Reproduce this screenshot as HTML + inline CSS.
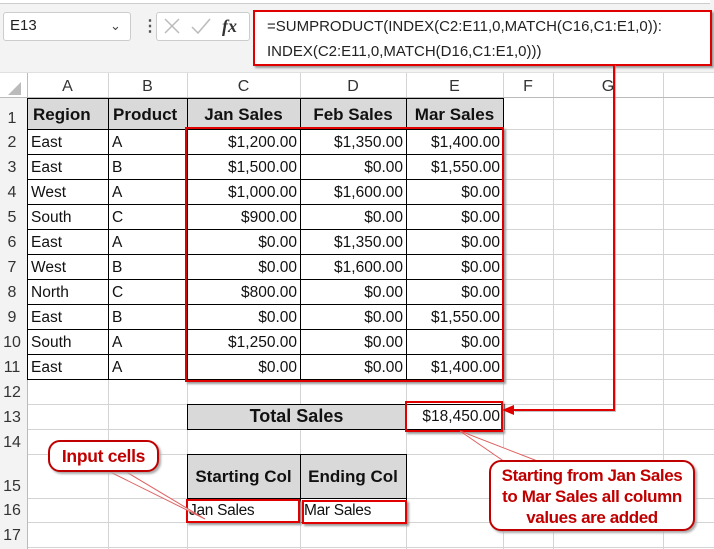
<!DOCTYPE html>
<html><head><meta charset="utf-8"><style>
body{margin:0;width:714px;height:549px;position:relative;overflow:hidden;background:#fff;font-family:"Liberation Sans",Arial,sans-serif;}
.a{position:absolute;}
.v{position:absolute;width:1px;background:#d4d4d4;}
.h{position:absolute;height:1px;background:#d4d4d4;}
.vb{position:absolute;width:1px;background:#000;}
.hb{position:absolute;height:1px;background:#000;}
.t{position:absolute;font-size:15.5px;color:#111;white-space:nowrap;height:25px;line-height:25px;}
.r{text-align:right;}
.c{text-align:center;}
.hd{font-weight:bold;font-size:17px;}
.rn{position:absolute;left:0;width:24px;text-align:center;font-size:16px;color:#333;}
.ch{position:absolute;top:73px;height:25px;line-height:27px;text-align:center;font-size:16px;color:#333;}
.call{position:absolute;border:2px solid #c00000;border-radius:12px;background:#fff;color:#c00000;font-weight:bold;text-align:center;box-shadow:2px 2px 2px #aaa;}
</style></head><body>
<div class="a" style="left:0;top:0;width:714px;height:72px;background:#f3f3f3"></div>
<div class="a" style="left:0;top:0;width:710px;height:3px;background:#fff;border-bottom:1px solid #ccc"></div>
<div class="a" style="left:3px;top:12px;width:126px;height:27px;background:#fff;border:1px solid #ccc;border-radius:3px"></div>
<div class="a" style="left:10px;top:13px;font-size:15px;line-height:26px;color:#222">E13</div>
<div class="a" style="left:110px;top:13px;font-size:13px;line-height:26px;color:#444">&#8964;</div>
<div class="a" style="left:142px;top:16px;font-size:16px;color:#555;font-weight:bold">&#8942;</div>
<div class="a" style="left:156px;top:12px;width:92px;height:27px;background:#fff;border:1px solid #ccc;border-radius:3px"></div>
<svg class="a" style="left:160px;top:15px" width="90" height="22"><path d="M5 4 L19 18 M19 4 L5 18" stroke="#bbb" stroke-width="1.5"/><path d="M32 12 L38 18 L50 4" stroke="#bbb" stroke-width="1.5" fill="none"/><text x="62" y="17" font-family="Liberation Serif" font-style="italic" font-weight="bold" font-size="18" fill="#333">fx</text></svg>
<div class="a" style="left:253px;top:10px;width:455px;height:52px;background:#fff;border:2px solid #e00000;box-shadow:2px 2px 2px #999"></div>
<div class="a" style="left:267px;top:14px;font-size:15px;line-height:25px;color:#222">=SUMPRODUCT(INDEX(C2:E11,0,MATCH(C16,C1:E1,0)):<br>INDEX(C2:E11,0,MATCH(D16,C1:E1,0)))</div>

<div class="a" style="left:0;top:72px;width:714px;height:1px;background:#e0e0e0"></div>
<svg class="a" style="left:6px;top:82px" width="16" height="14"><path d="M15 0 L15 13 L2 13Z" fill="#bbb"/></svg>
<div class="ch" style="left:27px;width:81px">A</div>
<div class="ch" style="left:108px;width:79px">B</div>
<div class="ch" style="left:187px;width:113px">C</div>
<div class="ch" style="left:300px;width:106px">D</div>
<div class="ch" style="left:406px;width:97px">E</div>
<div class="ch" style="left:503px;width:50px">F</div>
<div class="ch" style="left:553px;width:110px">G</div>

<div class="v" style="left:27px;top:73px;height:476px;background:#bbb"></div>
<div class="v" style="left:108px;top:73px;height:476px"></div>
<div class="v" style="left:187px;top:73px;height:476px"></div>
<div class="v" style="left:300px;top:73px;height:476px"></div>
<div class="v" style="left:406px;top:73px;height:476px"></div>
<div class="v" style="left:503px;top:73px;height:476px"></div>
<div class="v" style="left:553px;top:73px;height:476px"></div>
<div class="v" style="left:663px;top:73px;height:476px"></div>
<div class="h" style="left:0;top:97px;width:714px;background:#bbb"></div>
<div class="h" style="left:0;top:129px;width:714px"></div>
<div class="h" style="left:0;top:154px;width:714px"></div>
<div class="h" style="left:0;top:179px;width:714px"></div>
<div class="h" style="left:0;top:204px;width:714px"></div>
<div class="h" style="left:0;top:229px;width:714px"></div>
<div class="h" style="left:0;top:254px;width:714px"></div>
<div class="h" style="left:0;top:279px;width:714px"></div>
<div class="h" style="left:0;top:304px;width:714px"></div>
<div class="h" style="left:0;top:329px;width:714px"></div>
<div class="h" style="left:0;top:354px;width:714px"></div>
<div class="h" style="left:0;top:379px;width:714px"></div>
<div class="h" style="left:0;top:404px;width:714px"></div>
<div class="h" style="left:0;top:429px;width:714px"></div>
<div class="h" style="left:0;top:454px;width:714px"></div>
<div class="h" style="left:0;top:498px;width:714px"></div>
<div class="h" style="left:0;top:522px;width:714px"></div>
<div class="h" style="left:0;top:547px;width:714px"></div>
<div class="a" style="left:0;top:98px;width:27px;height:451px;background:#f3f3f3;border-right:1px solid #bbb"></div>

<div class="rn" style="line-height:25px;height:25px;top:106px">1</div>
<div class="rn" style="top:130px;line-height:25px">2</div>
<div class="rn" style="top:155px;line-height:25px">3</div>
<div class="rn" style="top:180px;line-height:25px">4</div>
<div class="rn" style="top:205px;line-height:25px">5</div>
<div class="rn" style="top:230px;line-height:25px">6</div>
<div class="rn" style="top:255px;line-height:25px">7</div>
<div class="rn" style="top:280px;line-height:25px">8</div>
<div class="rn" style="top:305px;line-height:25px">9</div>
<div class="rn" style="top:330px;line-height:25px">10</div>
<div class="rn" style="top:355px;line-height:25px">11</div>
<div class="rn" style="top:380px;line-height:25px">12</div>
<div class="rn" style="top:405px;line-height:25px">13</div>
<div class="rn" style="top:430px;line-height:25px">14</div>
<div class="rn" style="top:474px;line-height:25px">15</div>
<div class="rn" style="top:498px;line-height:25px">16</div>
<div class="rn" style="top:523px;line-height:25px">17</div>

<div class="a" style="left:28px;top:98px;width:475px;height:31px;background:#d9d9d9"></div>
<div class="a" style="left:187px;top:404px;width:219px;height:25px;background:#d9d9d9"></div>
<div class="a" style="left:187px;top:454px;width:219px;height:44px;background:#d9d9d9"></div>

<div class="vb" style="left:27px;top:98px;height:281px"></div>
<div class="vb" style="left:108px;top:98px;height:281px"></div>
<div class="vb" style="left:187px;top:98px;height:281px"></div>
<div class="vb" style="left:300px;top:98px;height:281px"></div>
<div class="vb" style="left:406px;top:98px;height:281px"></div>
<div class="vb" style="left:503px;top:98px;height:281px"></div>
<div class="hb" style="left:27px;top:98px;width:477px"></div>
<div class="hb" style="left:27px;top:129px;width:477px"></div>
<div class="hb" style="left:27px;top:154px;width:477px"></div>
<div class="hb" style="left:27px;top:179px;width:477px"></div>
<div class="hb" style="left:27px;top:204px;width:477px"></div>
<div class="hb" style="left:27px;top:229px;width:477px"></div>
<div class="hb" style="left:27px;top:254px;width:477px"></div>
<div class="hb" style="left:27px;top:279px;width:477px"></div>
<div class="hb" style="left:27px;top:304px;width:477px"></div>
<div class="hb" style="left:27px;top:329px;width:477px"></div>
<div class="hb" style="left:27px;top:354px;width:477px"></div>
<div class="hb" style="left:27px;top:379px;width:477px"></div>
<div class="a" style="left:187px;top:404px;width:316px;height:24px;border:1px solid #000;box-sizing:content-box"></div>
<div class="vb" style="left:406px;top:404px;height:25px"></div>
<div class="a" style="left:187px;top:454px;width:218px;height:67px;border:1px solid #000"></div>
<div class="vb" style="left:300px;top:454px;height:68px"></div>
<div class="hb" style="left:187px;top:498px;width:219px"></div>

<div class="t hd" style="left:33px;top:101px;height:28px;line-height:28px">Region</div>
<div class="t hd" style="left:113px;top:101px;height:28px;line-height:28px">Product</div>
<div class="t hd c" style="left:187px;width:113px;top:101px;height:28px;line-height:28px">Jan Sales</div>
<div class="t hd c" style="left:300px;width:106px;top:101px;height:28px;line-height:28px">Feb Sales</div>
<div class="t hd c" style="left:406px;width:97px;top:101px;height:28px;line-height:28px">Mar Sales</div>

<div class="t" style="left:31px;top:130px">East</div><div class="t" style="left:112px;top:130px">A</div><div class="t r" style="right:417px;top:130px">$1,200.00</div><div class="t r" style="right:311px;top:130px">$1,350.00</div><div class="t r" style="right:214px;top:130px">$1,400.00</div>
<div class="t" style="left:31px;top:155px">East</div><div class="t" style="left:112px;top:155px">B</div><div class="t r" style="right:417px;top:155px">$1,500.00</div><div class="t r" style="right:311px;top:155px">$0.00</div><div class="t r" style="right:214px;top:155px">$1,550.00</div>
<div class="t" style="left:31px;top:180px">West</div><div class="t" style="left:112px;top:180px">A</div><div class="t r" style="right:417px;top:180px">$1,000.00</div><div class="t r" style="right:311px;top:180px">$1,600.00</div><div class="t r" style="right:214px;top:180px">$0.00</div>
<div class="t" style="left:31px;top:205px">South</div><div class="t" style="left:112px;top:205px">C</div><div class="t r" style="right:417px;top:205px">$900.00</div><div class="t r" style="right:311px;top:205px">$0.00</div><div class="t r" style="right:214px;top:205px">$0.00</div>
<div class="t" style="left:31px;top:230px">East</div><div class="t" style="left:112px;top:230px">A</div><div class="t r" style="right:417px;top:230px">$0.00</div><div class="t r" style="right:311px;top:230px">$1,350.00</div><div class="t r" style="right:214px;top:230px">$0.00</div>
<div class="t" style="left:31px;top:255px">West</div><div class="t" style="left:112px;top:255px">B</div><div class="t r" style="right:417px;top:255px">$0.00</div><div class="t r" style="right:311px;top:255px">$1,600.00</div><div class="t r" style="right:214px;top:255px">$0.00</div>
<div class="t" style="left:31px;top:280px">North</div><div class="t" style="left:112px;top:280px">C</div><div class="t r" style="right:417px;top:280px">$800.00</div><div class="t r" style="right:311px;top:280px">$0.00</div><div class="t r" style="right:214px;top:280px">$0.00</div>
<div class="t" style="left:31px;top:305px">East</div><div class="t" style="left:112px;top:305px">B</div><div class="t r" style="right:417px;top:305px">$0.00</div><div class="t r" style="right:311px;top:305px">$0.00</div><div class="t r" style="right:214px;top:305px">$1,550.00</div>
<div class="t" style="left:31px;top:330px">South</div><div class="t" style="left:112px;top:330px">A</div><div class="t r" style="right:417px;top:330px">$1,250.00</div><div class="t r" style="right:311px;top:330px">$0.00</div><div class="t r" style="right:214px;top:330px">$0.00</div>
<div class="t" style="left:31px;top:355px">East</div><div class="t" style="left:112px;top:355px">A</div><div class="t r" style="right:417px;top:355px">$0.00</div><div class="t r" style="right:311px;top:355px">$0.00</div><div class="t r" style="right:214px;top:355px">$1,400.00</div>

<div class="t hd c" style="left:187px;width:219px;top:404px;font-size:18px">Total Sales</div>
<div class="t r" style="right:214px;top:404px">$18,450.00</div>
<div class="t hd c" style="left:187px;width:113px;top:463px;height:28px;line-height:28px">Starting Col</div>
<div class="t hd c" style="left:300px;width:106px;top:463px;height:28px;line-height:28px">Ending Col</div>
<div class="t" style="left:189px;top:498px;font-size:15.5px;letter-spacing:-0.3px">Jan Sales</div>
<div class="t" style="left:304px;top:498px;font-size:15.5px;letter-spacing:-0.3px">Mar Sales</div>

<div class="a" style="left:185px;top:127px;width:315px;height:251px;border:2px solid #e00000;box-shadow:2px 2px 2px #999"></div>
<div class="a" style="left:405px;top:401px;width:94px;height:27px;border:2px solid #e00000;box-shadow:2px 2px 2px #999"></div>
<div class="a" style="left:186px;top:499px;width:110px;height:20px;border:2px solid #e00000;box-shadow:2px 2px 2px #999"></div>
<div class="a" style="left:302px;top:500px;width:101px;height:20px;border:2px solid #e00000;box-shadow:2px 2px 2px #999"></div>

<svg class="a" style="left:0;top:0" width="714" height="549">
<path d="M614 64 L614 410 L514 410" stroke="#888" stroke-width="2" fill="none" transform="translate(1,1)" opacity=".5"/>
<path d="M614 64 L614 410 L514 410" stroke="#e00000" stroke-width="2" fill="none"/>
<path d="M502 410 L514 405 L514 415Z" fill="#e00000"/>
<path d="M460 431 L505 462 L540 462 Z" fill="#fff" stroke="#e06060" stroke-width="1"/>
<path d="M100 467 L205 519 L118 467 Z" fill="#fff" stroke="#e06060" stroke-width="1"/>
</svg>
<div class="call" style="left:48px;top:440px;width:107px;height:28px;line-height:28px;font-size:17.5px;letter-spacing:-0.3px">Input cells</div>
<div class="call" style="left:489px;top:460px;width:206px;height:71px;font-size:17px;letter-spacing:-0.4px;line-height:21px;padding-top:3px;box-sizing:border-box">Starting from Jan Sales<br>to Mar Sales all column<br>values are added</div>
</body></html>
